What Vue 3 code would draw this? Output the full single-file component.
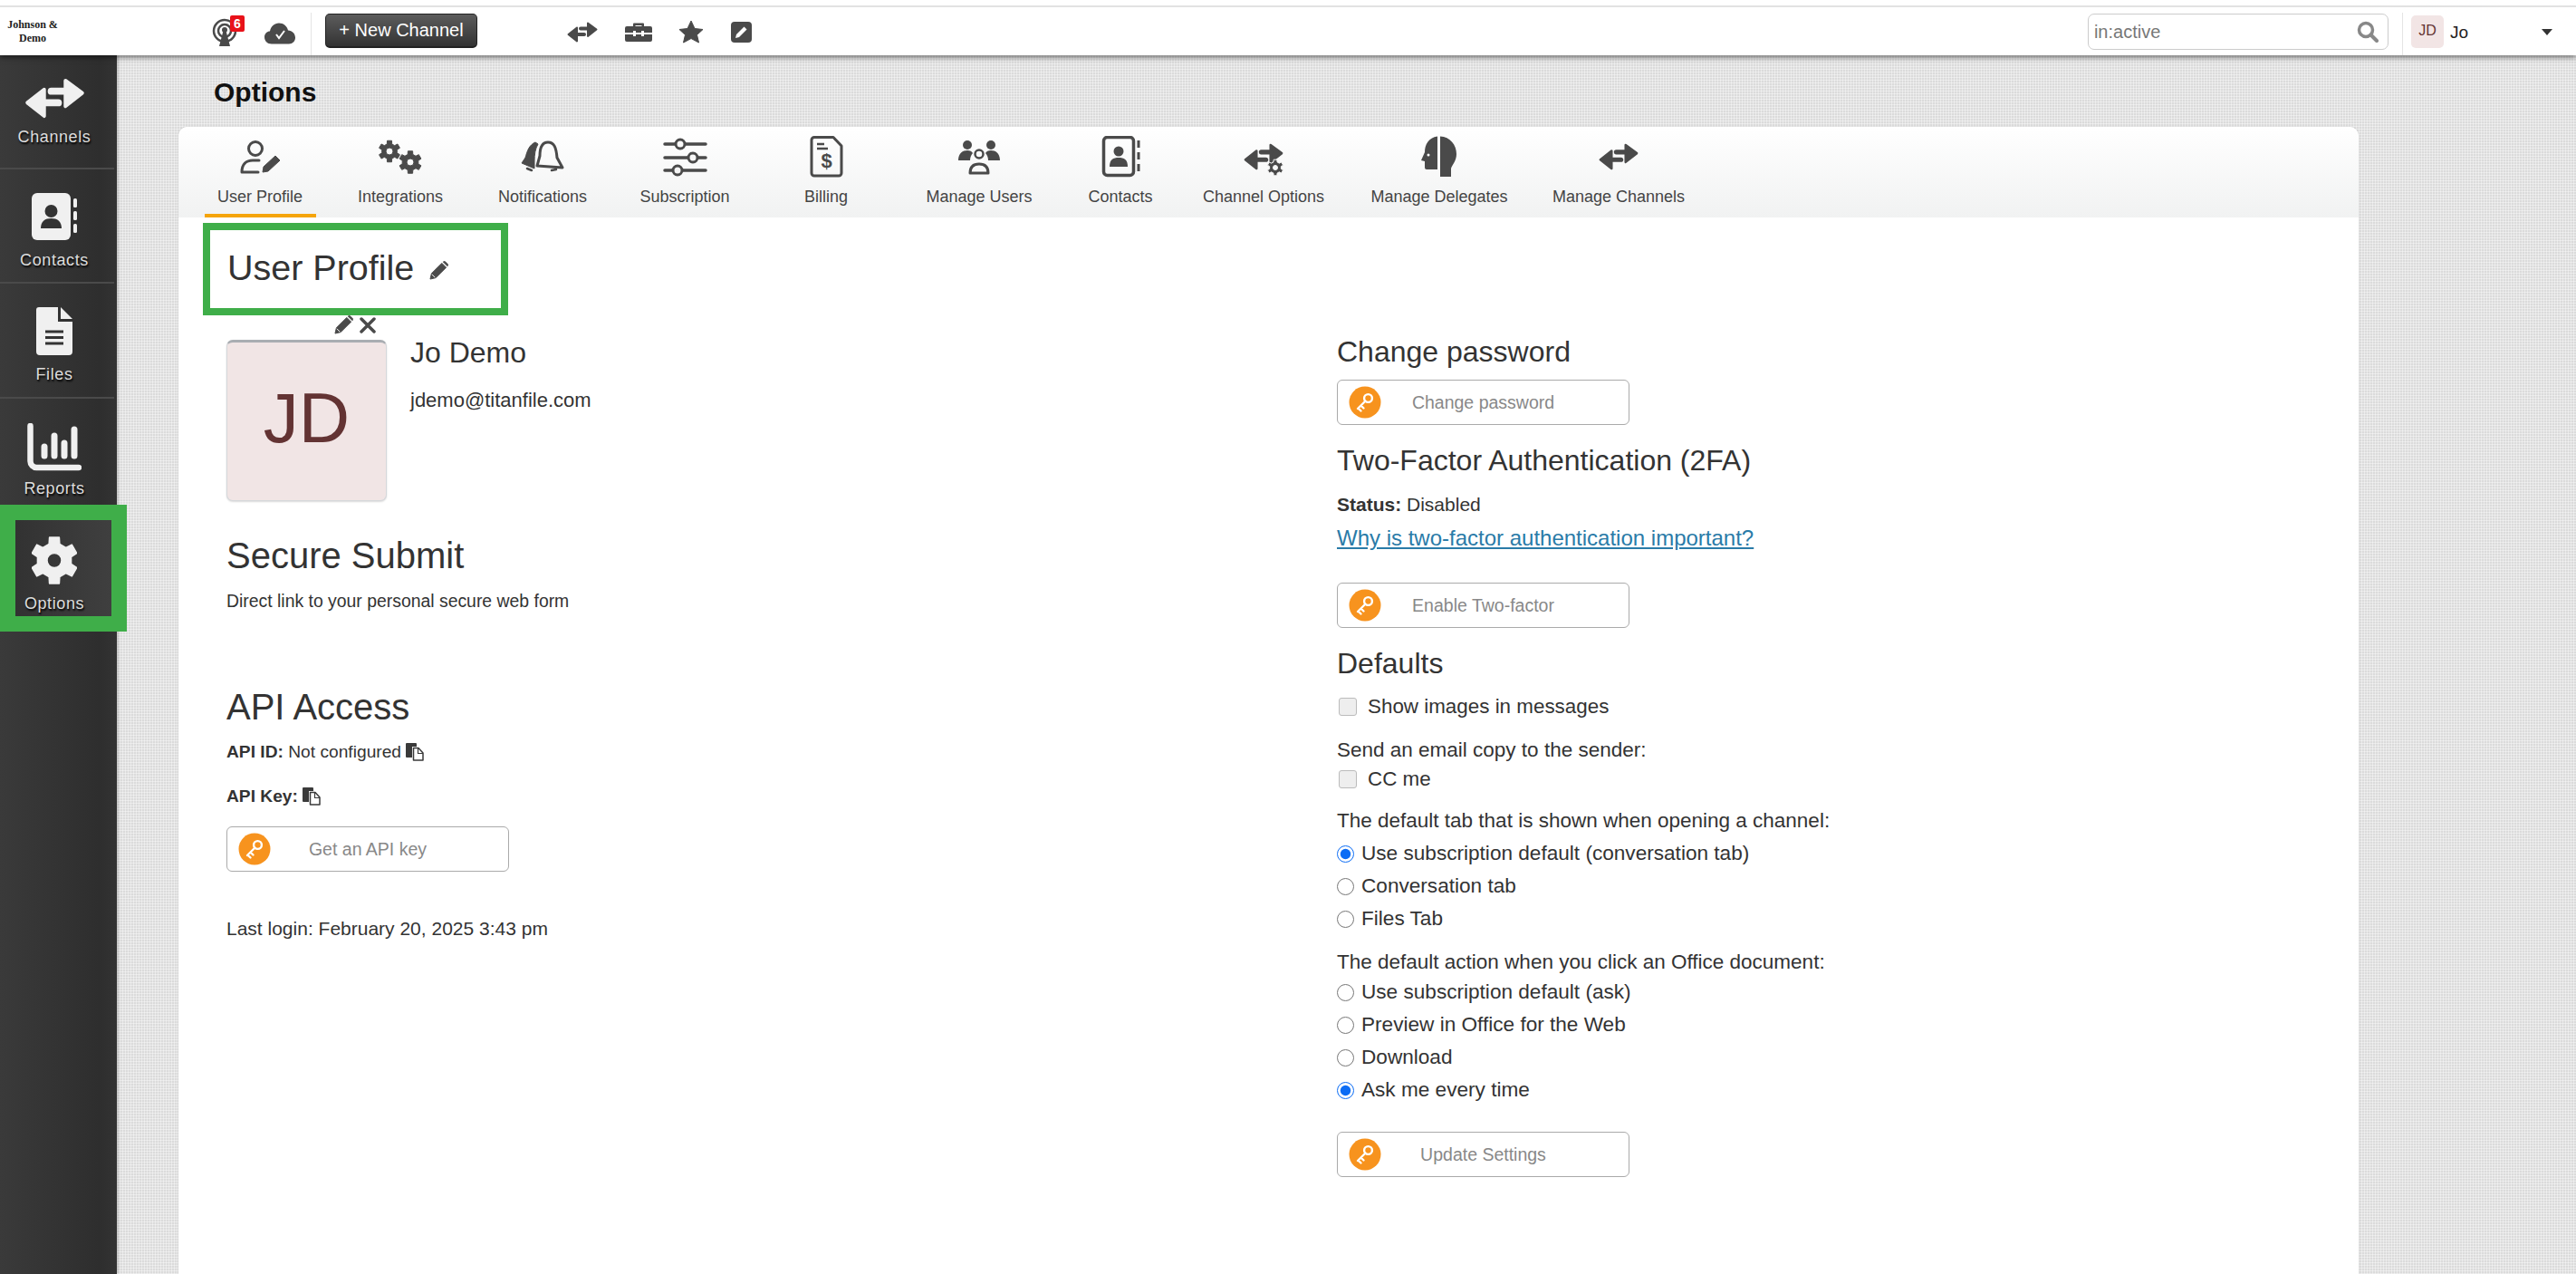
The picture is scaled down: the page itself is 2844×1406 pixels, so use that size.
<script setup>
function gear(cx, cy, ro, ri, n, hole) {
  const pts = []
  const step = (Math.PI * 2) / n
  for (let i = 0; i < n; i++) {
    const a = i * step - Math.PI / 2
    const w = step * 0.2
    const b = step * 0.3
    pts.push([cx + ri * Math.cos(a - b), cy + ri * Math.sin(a - b)])
    pts.push([cx + ro * Math.cos(a - w), cy + ro * Math.sin(a - w)])
    pts.push([cx + ro * Math.cos(a + w), cy + ro * Math.sin(a + w)])
    pts.push([cx + ri * Math.cos(a + b), cy + ri * Math.sin(a + b)])
  }
  const outer = 'M' + pts.map((p) => p[0].toFixed(2) + ' ' + p[1].toFixed(2)).join('L') + 'Z'
  const inner = `M${cx - hole} ${cy}a${hole} ${hole} 0 1 0 ${hole * 2} 0a${hole} ${hole} 0 1 0 ${-hole * 2} 0Z`
  return outer + inner
}
const firstRadios = [
  { label: 'Use subscription default (conversation tab)', checked: true },
  { label: 'Conversation tab', checked: false },
  { label: 'Files Tab', checked: false },
]
const secondRadios = [
  { label: 'Use subscription default (ask)', checked: false },
  { label: 'Preview in Office for the Web', checked: false },
  { label: 'Download', checked: false },
  { label: 'Ask me every time', checked: true },
]
</script>

<template>
  <div class="page">
    <svg class="defs" width="0" height="0">
      <defs>
        <symbol id="swap" viewBox="0 0 68 46">
          <polygon points="46,3 65,17 46,32" fill="currentColor" stroke="currentColor" stroke-width="4" stroke-linejoin="round" />
          <rect x="26" y="11" width="24" height="8" rx="4" fill="currentColor" />
          <polygon points="22,13 3,28 22,43" fill="currentColor" stroke="currentColor" stroke-width="4" stroke-linejoin="round" />
          <rect x="18" y="24" width="24" height="8" rx="4" fill="currentColor" />
        </symbol>
        <symbol id="key" viewBox="0 0 36 36">
          <circle cx="18" cy="18" r="17.5" fill="#f7931e" />
          <circle cx="21.5" cy="13.5" r="4.4" fill="none" stroke="#fff" stroke-width="2.4" />
          <path d="M18.5 16.5 L10 25 M10.5 24.5 l3 3 M13.5 21.5 l3 3" fill="none" stroke="#fff" stroke-width="2.4" stroke-linecap="round" />
        </symbol>
        <symbol id="pencil" viewBox="0 0 22 22">
          <path d="M1 21 L2.5 14.5 L14.5 2.5 L19.5 7.5 L7.5 19.5 Z M16 1 L18 0.5 L21.5 4 L21 6 Z" fill="currentColor" stroke="currentColor" stroke-linejoin="round" />
          <path d="M3 15.5 L6.5 19" stroke="#fff" stroke-width="1" />
        </symbol>
        <symbol id="copy" viewBox="0 0 20 20">
          <path d="M0 1 a1 1 0 0 1 1-1 h10 a1 1 0 0 1 1 1 v3 h-5 v12 h-6 a1 1 0 0 1-1-1Z" fill="#3a3a3a" />
          <path d="M8.500 5.500 h5.500 l5 5.500 v8 h-10.500Z" fill="#fff" stroke="#3a3a3a" stroke-width="1.500" stroke-linejoin="round" />
          <path d="M13.500 5.500 v6 h5.500" fill="none" stroke="#3a3a3a" stroke-width="1.200" />
        </symbol>
      </defs>
    </svg>

    <header class="topbar">
      <div class="logo">Johnson &amp;<br />Demo</div>
      <svg class="ic-signal" viewBox="0 0 28 32" width="28" height="32">
        <circle cx="14" cy="14" r="12" fill="none" stroke="#4a4a4a" stroke-width="2.500" />
        <circle cx="14" cy="14" r="7" fill="none" stroke="#4a4a4a" stroke-width="2.500" />
        <circle cx="14" cy="13" r="3" fill="#4a4a4a" />
        <path d="M12.500 14 L15.500 14 L20 31 L8 31 Z" fill="#4a4a4a" />
      </svg>
      <span class="badge">6</span>
      <svg class="ic-cloud" viewBox="0 0 34 24" width="34" height="24">
        <path d="M8 23.500 C3 23.500 0 20 0 16 C0 12 3 9.500 6 9.500 C7 4 11 0.500 16 0.500 C21 0.500 25 4 26 8.500 C30.500 9 34 12 34 16.500 C34 20.500 31 23.500 27 23.500 Z" fill="#4a4a4a" />
        <path d="M13 13 L16 17 L22 9" fill="none" stroke="#fff" stroke-width="2" />
      </svg>
      <span class="vsep first"></span>
      <button class="new-channel">+ New Channel</button>
      <svg class="ic-top swap-top" width="34" height="23"><use href="#swap" /></svg>
      <svg class="ic-top tool" viewBox="0 0 30 21" width="30" height="21">
        <path d="M9 4 V1.500 a1 1 0 0 1 1-1 h10 a1 1 0 0 1 1 1 V4 h-2.500 V3 h-7 v1Z" fill="#4a4a4a" />
        <path d="M0 6 a2 2 0 0 1 2-2 h26 a2 2 0 0 1 2 2 v5 h-9 v-2 h-3 v2 h-6 v-2 h-3 v2 h-9Z" fill="#4a4a4a" />
        <path d="M0 13 h9 v2 h3 v-2 h6 v2 h3 v-2 h9 v6 a2 2 0 0 1-2 2 h-26 a2 2 0 0 1-2-2Z" fill="#4a4a4a" />
      </svg>
      <svg class="ic-top star" viewBox="0 0 28 26" width="28" height="26">
        <path d="M14 1 L18 9.500 L27 10.500 L20.500 16.500 L22.500 25 L14 20.500 L5.500 25 L7.500 16.500 L1 10.500 L10 9.500 Z" fill="#4a4a4a" stroke="#4a4a4a" stroke-linejoin="round" />
      </svg>
      <svg class="ic-top edit" viewBox="0 0 23 23" width="23" height="23">
        <rect width="23" height="23" rx="4" fill="#4a4a4a" />
        <path d="M5 18 L6 14 L14.500 5.500 L17.500 8.500 L9 17 Z" fill="#fff" />
      </svg>
      <div class="search">
        <span>in:active</span>
        <svg viewBox="0 0 24 24" width="24" height="24">
          <circle cx="10" cy="10" r="7.500" fill="none" stroke="#888" stroke-width="3.500" />
          <path d="M15.500 15.500 L22 22" stroke="#888" stroke-width="4" stroke-linecap="round" />
        </svg>
      </div>
      <span class="vsep second"></span>
      <div class="mini-avatar">JD</div>
      <span class="who">Jo</span>
      <span class="caret"></span>
    </header>

    <div class="body">
      <nav class="sidebar">
        <a class="side-item s1">
          <svg width="67" height="45" class="side-ic"><use href="#swap" /></svg>
          <span>Channels</span>
        </a>
        <a class="side-item s2">
          <svg viewBox="0 0 50 52" width="50" height="52" class="side-ic">
            <rect x="0" y="0" width="43" height="52" rx="6" fill="#f0f0f0" />
            <circle cx="21.500" cy="20" r="7" fill="#333" />
            <path d="M10 39 c0-8 5-11 11.500-11 s11.500 3 11.500 11Z" fill="#333" />
            <rect x="46" y="6" width="4" height="10" rx="1.500" fill="#f0f0f0" />
            <rect x="46" y="20" width="4" height="10" rx="1.500" fill="#f0f0f0" />
            <rect x="46" y="34" width="4" height="10" rx="1.500" fill="#f0f0f0" />
          </svg>
          <span>Contacts</span>
        </a>
        <a class="side-item s3">
          <svg viewBox="0 0 40 53" width="40" height="53" class="side-ic">
            <path d="M3 0 H24 V16 H40 V49 a4 4 0 0 1-4 4 H4 a4 4 0 0 1-4-4 V3 a3 3 0 0 1 3-3Z" fill="#f0f0f0" />
            <path d="M27 0 L40 13 H27Z" fill="#f0f0f0" />
            <path d="M10 27 H30 M10 33.500 H30 M10 40 H30" stroke="#333" stroke-width="3" />
          </svg>
          <span>Files</span>
        </a>
        <a class="side-item s4">
          <svg viewBox="0 0 60 53" width="60" height="53" class="side-ic">
            <path d="M3.500 3 V42 a7 7 0 0 0 7 7 H57" fill="none" stroke="#f0f0f0" stroke-width="6.500" stroke-linecap="round" />
            <path d="M19 26 V36 M30 14 V36 M41 22 V36 M52 7 V36" stroke="#f0f0f0" stroke-width="7" stroke-linecap="round" />
          </svg>
          <span>Reports</span>
        </a>
        <a class="side-item s5">
          <svg viewBox="0 0 50 53" width="50" height="53" class="side-ic">
            <path :d="gear(25, 26.5, 26, 19, 6, 8)" fill="#f0f0f0" fill-rule="evenodd" stroke="#f0f0f0" stroke-width="1.500" stroke-linejoin="round" />
          </svg>
          <span>Options</span>
        </a>
        <div class="green-frame"></div>
      </nav>

      <main class="main">
        <h1 class="page-title">Options</h1>
        <section class="panel">
          <div class="tabs">
            <div class="tab active">
              <svg viewBox="0 0 50 46" class="tab-ic">
                <circle cx="20" cy="14" r="7.500" fill="none" stroke="#4a4a4a" stroke-width="3" />
                <path d="M5 40 c0-9 5-13 12-13 h7 M5 40 h18" fill="none" stroke="#4a4a4a" stroke-width="3" stroke-linecap="round" />
                <path d="M28 40 L29 34 L42 22 L47 27 L34 39 Z" fill="#4a4a4a" stroke="#4a4a4a" stroke-linejoin="round" />
              </svg>
              <span>User Profile</span>
            </div>
            <div class="tab">
              <svg viewBox="0 0 50 46" class="tab-ic">
                <path :d="gear(13, 17, 12, 8.500, 6, 4)" fill="#4a4a4a" fill-rule="evenodd" stroke="#4a4a4a" stroke-linejoin="round" />
                <path :d="gear(36, 29, 12.500, 9, 6, 4)" fill="#4a4a4a" fill-rule="evenodd" stroke="#4a4a4a" stroke-linejoin="round" />
              </svg>
              <span>Integrations</span>
            </div>
            <div class="tab">
              <svg viewBox="0 0 50 46" class="tab-ic">
                <path d="M17 7 C10 10 8 17 6 24 L2 30 L16 36 L16 28 C16 20 17 14 20 9 Z" fill="#4a4a4a" stroke="#4a4a4a" stroke-linejoin="round" />
                <path d="M31 7 C24 7 22 14 22 22 L19 33 L47 35 L41 24 C40 13 38 7 31 7 Z" fill="none" stroke="#4a4a4a" stroke-width="3" stroke-linejoin="round" />
                <path d="M8 36 l5 2 M35 38 l5 -1" stroke="#4a4a4a" stroke-width="2.500" stroke-linecap="round" />
              </svg>
              <span>Notifications</span>
            </div>
            <div class="tab">
              <svg viewBox="0 0 50 46" class="tab-ic">
                <path d="M3 9 H48 M3 24 H48 M3 38 H48" stroke="#4a4a4a" stroke-width="3.500" stroke-linecap="round" />
                <circle cx="20" cy="9" r="5" fill="#fafafa" stroke="#4a4a4a" stroke-width="3" />
                <circle cx="34" cy="24" r="5" fill="#f8f8f8" stroke="#4a4a4a" stroke-width="3" />
                <circle cx="17" cy="38" r="5" fill="#f4f4f4" stroke="#4a4a4a" stroke-width="3" />
              </svg>
              <span>Subscription</span>
            </div>
            <div class="tab">
              <svg viewBox="0 0 50 46" class="tab-ic">
                <path d="M12 1.500 H33 L42 11 V41 a3 3 0 0 1-3 3 H12 a3 3 0 0 1-3-3 V4.500 a3 3 0 0 1 3-3Z" fill="none" stroke="#4a4a4a" stroke-width="3" stroke-linejoin="round" />
                <path d="M15 9 H23 M15 14 H27" stroke="#4a4a4a" stroke-width="2.500" />
                <text x="25.500" y="35" text-anchor="middle" class="dollar">$</text>
              </svg>
              <span>Billing</span>
            </div>
            <div class="tab">
              <svg viewBox="0 0 50 46" class="tab-ic">
                <circle cx="12" cy="10" r="5" fill="#4a4a4a" />
                <circle cx="38" cy="10" r="5" fill="#4a4a4a" />
                <path d="M2 27 c0-8 5-11 10-11 c3 0 5 1 6 3 c-2 2-3 5-3 8Z M48 27 c0-8 -5-11 -10-11 c-3 0 -5 1 -6 3 c2 2 3 5 3 8Z" fill="#4a4a4a" />
                <circle cx="25" cy="20" r="4.500" fill="none" stroke="#4a4a4a" stroke-width="2.500" />
                <path d="M15 41 c0-7 4-10 10-10 s10 3 10 10 Z" fill="none" stroke="#4a4a4a" stroke-width="3" stroke-linejoin="round" />
              </svg>
              <span>Manage Users</span>
            </div>
            <div class="tab">
              <svg viewBox="0 0 50 46" class="tab-ic">
                <rect x="6.500" y="1.500" width="33" height="42" rx="4" fill="none" stroke="#4a4a4a" stroke-width="3.500" />
                <circle cx="23" cy="17" r="5.500" fill="#4a4a4a" />
                <path d="M13 34 c0-8 4-10 10-10 s10 2 10 10Z" fill="#4a4a4a" />
                <path d="M45 5 V13 M45 18 V26 M45 31 V39" stroke="#4a4a4a" stroke-width="3" />
              </svg>
              <span>Contacts</span>
            </div>
            <div class="tab">
              <svg viewBox="0 0 50 46" class="tab-ic">
                <svg x="3" y="8" width="44" height="30" class="ink"><use href="#swap" /></svg>
                <path :d="gear(38, 35, 9, 6.500, 6, 2.500)" fill="#4a4a4a" fill-rule="evenodd" stroke="#f5f5f5" stroke-width="1" />
              </svg>
              <span>Channel Options</span>
            </div>
            <div class="tab">
              <svg viewBox="0 0 50 46" class="tab-ic">
                <path d="M23 0.500 C13 2 9 10 9 18 L5 27 L9 28 V35 a2 2 0 0 0 2 2 H23 Z" fill="#4a4a4a" />
                <path d="M26 0.500 C37 1 44 10 44 20 C44 28 39 32 38 36 V45 H26 Z" fill="#4a4a4a" />
                <circle cx="13" cy="21" r="1.500" fill="#fff" />
              </svg>
              <span>Manage Delegates</span>
            </div>
            <div class="tab">
              <svg viewBox="0 0 50 46" class="tab-ic">
                <svg x="3" y="8" width="44" height="30" class="ink"><use href="#swap" /></svg>
              </svg>
              <span>Manage Channels</span>
            </div>
          </div>

          <div class="profile-heading">
            <h2>User Profile</h2>
            <svg class="ink" width="21" height="21"><use href="#pencil" /></svg>
          </div>

          <div class="columns">
            <div class="col-left">
              <div class="identity">
                <div class="avatar-wrap">
                  <div class="avatar-actions">
                    <svg class="ink" width="21" height="21"><use href="#pencil" /></svg>
                    <svg viewBox="0 0 18 18" width="18" height="18">
                      <path d="M2 2 L16 16 M16 2 L2 16" stroke="#4a4a4a" stroke-width="3.500" stroke-linecap="round" />
                    </svg>
                  </div>
                  <div class="avatar">JD</div>
                </div>
                <div class="identity-text">
                  <div class="name">Jo Demo</div>
                  <div class="email">jdemo@titanfile.com</div>
                </div>
              </div>

              <h2 class="secure">Secure Submit</h2>
              <p class="direct">Direct link to your personal secure web form</p>

              <h2 class="api">API Access</h2>
              <p class="api-id"><b>API ID:</b> Not configured <svg width="20" height="20" class="copy"><use href="#copy" /></svg></p>
              <p class="api-key"><b>API Key:</b> <svg width="20" height="20" class="copy"><use href="#copy" /></svg></p>
              <button class="key-btn wide api-btn">
                <svg width="36" height="36"><use href="#key" /></svg>
                <span>Get an API key</span>
              </button>
              <p class="last-login">Last login: February 20, 2025 3:43 pm</p>
            </div>

            <div class="col-right">
              <h3 class="change">Change password</h3>
              <button class="key-btn b1">
                <svg width="36" height="36"><use href="#key" /></svg>
                <span>Change password</span>
              </button>
              <h3 class="tfa">Two-Factor Authentication (2FA)</h3>
              <p class="status"><b>Status:</b> Disabled</p>
              <a class="why">Why is two-factor authentication important?</a>
              <button class="key-btn b2">
                <svg width="36" height="36"><use href="#key" /></svg>
                <span>Enable Two-factor</span>
              </button>
              <h3 class="defaults">Defaults</h3>
              <label class="check-row show"><input type="checkbox" /> <span>Show images in messages</span></label>
              <p class="q send">Send an email copy to the sender:</p>
              <label class="check-row cc"><input type="checkbox" /> <span>CC me</span></label>
              <p class="q tabq">The default tab that is shown when opening a channel:</p>
              <div class="radios r1">
                <label v-for="r in firstRadios" :key="r.label" class="radio-row">
                  <input type="radio" name="tab" :checked="r.checked" />
                  <span>{{ r.label }}</span>
                </label>
              </div>
              <p class="q actq">The default action when you click an Office document:</p>
              <div class="radios r2">
                <label v-for="r in secondRadios" :key="r.label" class="radio-row">
                  <input type="radio" name="act" :checked="r.checked" />
                  <span>{{ r.label }}</span>
                </label>
              </div>
              <button class="key-btn b3">
                <svg width="36" height="36"><use href="#key" /></svg>
                <span>Update Settings</span>
              </button>
            </div>
          </div>
        </section>
      </main>
    </div>
  </div>
</template>

<style>
html, body { margin: 0; padding: 0; overflow: hidden; background: #e4e4e4; }
</style>

<style scoped>
* { box-sizing: border-box; }
.page {
  width: 2844px;
  height: 1406px;
  overflow: hidden;
  font-family: "Liberation Sans", Arial, sans-serif;
  color: #333;
  display: flex;
  flex-direction: column;
  position: relative;
}
.defs { position: absolute; }
h1, h2, h3, p { margin: 0; font-weight: normal; }
.ink { color: #4a4a4a; }

.topbar {
  height: 61px;
  flex: none;
  background: #fff;
  padding-top: 2px;
  display: flex;
  align-items: center;
  position: relative;
  z-index: 5;
  box-shadow: 0 2px 6px rgba(0, 0, 0, 0.55);
}
.topbar::before {
  content: "";
  position: absolute;
  left: 0;
  right: 0;
  top: 6px;
  height: 2px;
  background: #e2e2e2;
}
.logo {
  font-family: "Liberation Serif", serif;
  font-weight: bold;
  font-size: 12px;
  line-height: 15px;
  color: #222;
  width: 62px;
  margin-left: 5px;
  margin-top: 6px;
  margin-right: 14px;
  text-align: center;
  flex: none;
}
.ic-signal { margin-left: 153px; margin-top: 8px; flex: none; }
.badge {
  width: 16px;
  height: 18px;
  background: #e8121a;
  color: #fff;
  font-size: 14px;
  font-weight: bold;
  line-height: 18px;
  text-align: center;
  border-radius: 2px;
  margin-left: -8px;
  margin-top: -12px;
  flex: none;
  position: relative;
}
.ic-cloud { margin-left: 22px; margin-top: 10px; flex: none; }
.vsep { width: 1px; height: 47px; background: #e4e4e4; flex: none; align-self: flex-end; }
.vsep.first { margin-left: 17px; }
.new-channel {
  margin-left: 15px;
  margin-top: 4px;
  width: 168px;
  height: 38px;
  flex: none;
  border: 1px solid #222;
  border-bottom: 2px solid #222;
  border-radius: 5px;
  background: linear-gradient(#5c5c5c, #333);
  color: #fff;
  font: 20px "Liberation Sans", Arial, sans-serif;
  padding: 0;
}
.ic-top { flex: none; color: #4a4a4a; margin-top: 7px; }
.swap-top { margin-left: 99px; }
.tool { margin-left: 30px; }
.star { margin-left: 29px; }
.edit { margin-left: 30px; }
.search {
  margin-left: auto;
  margin-top: 7px;
  width: 332px;
  height: 40px;
  border: 1px solid #ccc;
  border-radius: 7px;
  display: flex;
  align-items: center;
  justify-content: space-between;
  padding: 0 10px 0 6px;
  font-size: 20px;
  color: #777;
  flex: none;
}
.vsep.second { margin-left: 15px; }
.mini-avatar {
  margin-left: 9px;
  margin-top: 7px;
  width: 36px;
  height: 36px;
  background: #f2e5e5;
  border-radius: 5px;
  color: #633333;
  font-size: 16px;
  text-align: center;
  line-height: 33px;
  flex: none;
}
.who { margin-left: 7px; margin-top: 9px; font-size: 19px; color: #222; flex: none; }
.caret {
  margin-left: 81px;
  margin-right: 26px;
  margin-top: 7px;
  width: 0;
  height: 0;
  border-left: 6px solid transparent;
  border-right: 6px solid transparent;
  border-top: 7px solid #333;
  flex: none;
}

.body { flex: 1; display: flex; min-height: 0; }
.sidebar {
  width: 129px;
  flex: none;
  background: linear-gradient(90deg, #3a3a3a, #2e2e2e 85%, #333 100%);
  position: relative;
  z-index: 2;
  box-shadow: 1px 0 3px rgba(0, 0, 0, 0.25);
  display: flex;
  flex-direction: column;
}
.side-item {
  width: 126px;
  display: flex;
  flex-direction: column;
  align-items: center;
  padding-right: 6px;
  border-bottom: 2px solid #4a4a4a;
  color: #ddd;
  font-size: 18px;
  letter-spacing: 0.6px;
  text-shadow: 1px 2px 2px #000;
  line-height: 22px;
  position: relative;
  z-index: 1;
}
.side-ic { flex: none; color: #f0f0f0; }
.s1 { height: 126px; padding-top: 25px; }
.s1 span { margin-top: 9px; }
.s2 { height: 126px; padding-top: 26px; }
.s2 span { margin-top: 11px; }
.s3 { height: 127px; padding-top: 26px; }
.s3 span { margin-top: 10px; }
.s4 { height: 135px; padding-top: 27px; border-bottom: 0; }
.s4 span { margin-top: 8px; }
.s5 { height: 120px; padding-top: 17px; border-bottom: 0; }
.s5 span { margin-top: 10px; }
.green-frame {
  position: absolute;
  left: 0;
  top: 496px;
  width: 140px;
  height: 140px;
  border: 17px solid #3fae49;
  background: linear-gradient(90deg, #323232, #3f3f3f) padding-box;
  pointer-events: none;
}

.main {
  flex: 1;
  min-width: 0;
  padding-left: 68px;
  background-color: #dbdbdb;
  background-image:
    repeating-linear-gradient(90deg, rgba(255, 255, 255, 0.4) 0 1px, transparent 1px 3px),
    repeating-linear-gradient(0deg, rgba(255, 255, 255, 0.4) 0 1px, transparent 1px 3px);
}
.page-title {
  font-size: 30px;
  font-weight: bold;
  color: #111;
  line-height: 40px;
  margin: 21px 0 18px 39px;
}
.panel {
  width: 2407px;
  height: 1400px;
  background: #fff;
  border-radius: 10px 10px 0 0;
  box-shadow: 0 0 2px rgba(0, 0, 0, 0.15);
}
.tabs {
  height: 100px;
  background: linear-gradient(#fff, #f1f2f2);
  border-radius: 10px 10px 0 0;
  padding-left: 12.5px;
  display: flex;
}
.tab {
  height: 100px;
  width: 155px;
  flex: none;
  padding-top: 10px;
  display: flex;
  flex-direction: column;
  align-items: center;
  font-size: 18px;
  color: #444;
  white-space: nowrap;
  position: relative;
}
.tab:nth-child(3) { width: 159px; }
.tab:nth-child(5) { width: 157px; }
.tab:nth-child(6) { width: 181px; }
.tab:nth-child(7) { width: 131px; }
.tab:nth-child(8) { width: 185px; }
.tab:nth-child(9) { width: 203px; }
.tab:nth-child(10) { width: 193px; }
.tab.active::after {
  content: "";
  position: absolute;
  left: 16px;
  width: 123px;
  bottom: 0;
  height: 4px;
  background: #f5a40a;
}
.tab-ic { width: 50px; height: 46px; flex: none; }
.tab span { margin-top: 11px; line-height: 20px; }
.dollar { font: bold 22px "Liberation Sans", Arial, sans-serif; fill: #4a4a4a; }

.profile-heading {
  margin: 6px 0 0 27px;
  width: 337px;
  height: 102px;
  border: 8px solid #3fae49;
  padding-left: 19px;
  display: flex;
  align-items: center;
  gap: 17px;
}
.profile-heading h2 { font-size: 39.5px; line-height: 46px; color: #333; margin-top: -4px; }
.profile-heading svg { margin-top: 2px; }

.columns { display: flex; padding-left: 53px; }
.col-left { width: 1226px; flex: none; }
.col-right { flex: 1; }

.identity { display: flex; margin-top: 27px; }
.avatar-wrap { position: relative; }
.avatar-actions {
  position: absolute;
  left: 119px;
  top: -27px;
  display: flex;
  gap: 7px;
  align-items: center;
}
.avatar {
  width: 177px;
  height: 178px;
  background: #f1e5e5;
  border: 1px solid #d5d8db;
  border-top: 3px solid #a9adb2;
  border-radius: 7px;
  box-shadow: 0 1px 2px rgba(0, 0, 0, 0.15);
  color: #633333;
  font-size: 78px;
  line-height: 166px;
  text-align: center;
}
.identity-text { margin-left: 26px; }
.name { font-size: 32px; line-height: 40px; margin-top: -6px; }
.email { font-size: 22px; line-height: 30px; margin-top: 18px; }

.secure { font-size: 40px; line-height: 46px; margin-top: 37px; }
.direct { font-size: 19.4px; line-height: 30px; margin-top: 12px; }
.api { font-size: 40px; line-height: 46px; margin-top: 79px; }
.api-id, .api-key { font-size: 19.2px; line-height: 30px; }
.api-id { margin-top: 12px; }
.api-key { margin-top: 19px; }
.copy { vertical-align: -4px; }
.api-btn { margin-top: 18px; }
.last-login { font-size: 21px; line-height: 30px; margin-top: 48px; }

.key-btn {
  display: flex;
  align-items: center;
  width: 323px;
  height: 50px;
  border: 1.5px solid #aaa;
  border-radius: 6px;
  background: #fff;
  padding: 0 0 0 12px;
  font: 19.5px "Liberation Sans", Arial, sans-serif;
  color: #888;
  position: relative;
}
.key-btn.wide { width: 312px; }
.key-btn span {
  position: absolute;
  left: 0;
  right: 0;
  text-align: center;
  top: 13px;
}
.col-right h3 { font-size: 32px; line-height: 40px; }
.change { margin-top: 20px; }
.b1 { margin-top: 11px; }
.tfa { margin-top: 19px; }
.status { font-size: 21px; line-height: 30px; margin-top: 14px; }
.why {
  display: block;
  font-size: 24px;
  line-height: 30px;
  margin-top: 7px;
  color: #2a7ba8;
  text-decoration: underline;
}
.b2 { margin-top: 34px; }
.defaults { margin-top: 19px; }
.check-row { display: flex; align-items: center; font-size: 22.4px; line-height: 30px; }
.check-row input {
  appearance: none;
  width: 20px;
  height: 20px;
  margin: 0 12px 0 2px;
  background: #eee;
  border: 1px solid #bbb;
  border-radius: 3px;
  flex: none;
}
.show { margin-top: 13px; }
.q { font-size: 22.5px; line-height: 30px; }
.send { margin-top: 18px; }
.cc { margin-top: 2px; }
.tabq { margin-top: 16px; }
.r1 { margin-top: 3px; }
.actq { margin-top: 15px; }
.r2 { margin-top: 0; }
.radio-row { display: flex; align-items: center; height: 36px; font-size: 22.6px; }
.radio-row input {
  width: 19px;
  height: 19px;
  margin: 0 8px 0 0;
  accent-color: #0b6cf5;
  flex: none;
}
.b3 { margin-top: 28px; }
</style>
